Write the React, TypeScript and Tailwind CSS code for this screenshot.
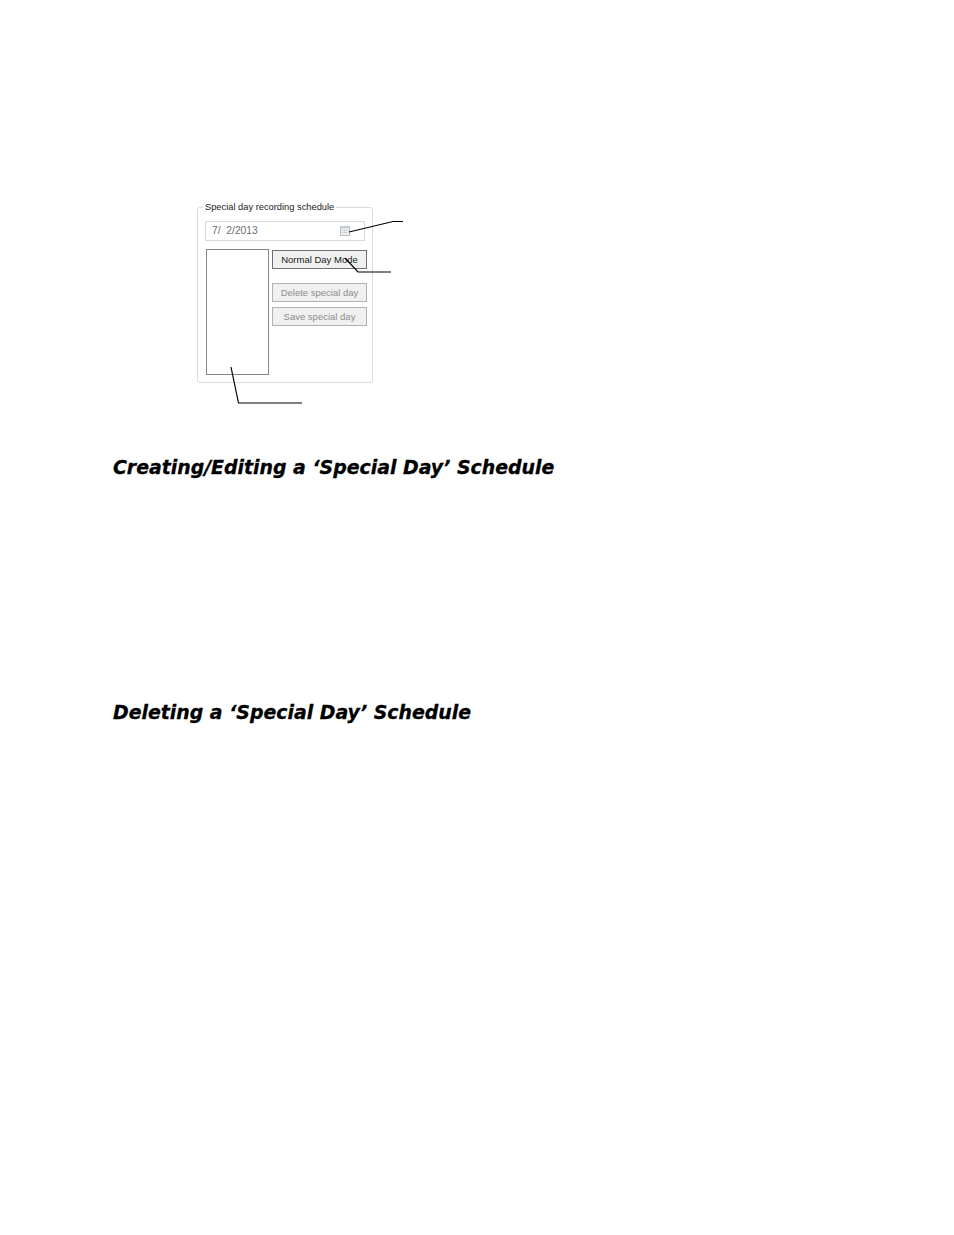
import React from "react";

const ui = { fontFamily: '"Liberation Sans", Arial, sans-serif' };
const head = { fontFamily: '"DejaVu Sans", "Liberation Sans", sans-serif' };

function CalendarIcon() {
  return (
    <svg width="10" height="10" viewBox="0 0 10 10" className="block">
      <rect x="0.5" y="0.5" width="9" height="9" fill="#eceef0" stroke="#b9bec4" />
      <rect x="0.5" y="0.5" width="9" height="2" fill="#c9ced3" />
      <g fill="#b5bbc1">
        <rect x="2" y="4" width="1" height="1" />
        <rect x="4" y="4" width="1" height="1" />
        <rect x="6" y="4" width="1" height="1" />
        <rect x="2" y="6" width="1" height="1" />
        <rect x="4" y="6" width="1" height="1" />
        <rect x="6" y="6" width="1" height="1" />
      </g>
    </svg>
  );
}

function Btn({ label, disabled }: { label: string; disabled?: boolean }) {
  return (
    <div
      className={
        "h-[19px] w-[95px] flex items-center justify-center text-[9.5px] leading-none bg-[#f0f0f0] border " +
        (disabled
          ? "border-[#adb2b5] text-[#8d8d8d]"
          : "border-[#707070] text-[#1a1a1a]")
      }
    >
      {label}
    </div>
  );
}

export default function App() {
  return (
    <div className="relative w-[954px] h-[1235px] bg-white" style={ui}>
      <div className="pt-[207px] pl-[197px]">
        <div className="relative w-[176px] h-[176px] border border-[#d5dde3] rounded-[3px] pt-[13px] pl-[7px]">
          <span className="absolute left-[5px] top-[-7px] bg-white px-[2px] text-[9.3px] leading-[12px] text-[#1a1a1a]">
            Special day recording schedule
          </span>
          <div className="w-[160px] h-[20px] border border-[#d3d9de] flex items-center justify-between pl-[6px] pr-[14px]">
            <span className="text-[10.3px] leading-none text-[#6d6d6d] whitespace-pre">7/  2/2013</span>
            <CalendarIcon />
          </div>
          <div className="flex mt-[8px] pl-[1px] gap-[3px]">
            <div className="w-[63px] h-[126px] border border-[#828790] bg-white" />
            <div className="flex flex-col pt-[1px]">
              <Btn label="Normal Day Mode" />
              <div className="mt-[14px] flex flex-col gap-[5px]">
                <Btn label="Delete special day" disabled />
                <Btn label="Save special day" disabled />
              </div>
            </div>
          </div>
        </div>
      </div>

      <h2
        className="mt-[72px] ml-[113px] text-[18.9px] leading-[24px] font-bold italic text-black [-webkit-text-stroke:0.3px_black]"
        style={head}
      >
        Creating/Editing a ‘Special Day’ Schedule
      </h2>
      <h2
        className="mt-[221px] ml-[113px] text-[18.9px] leading-[24px] font-bold italic text-black [-webkit-text-stroke:0.3px_black]"
        style={head}
      >
        Deleting a ‘Special Day’ Schedule
      </h2>

      <svg className="absolute left-0 top-0 pointer-events-none" width="954" height="1235">
        <g stroke="#000" strokeWidth="1.2" fill="none">
          <polyline points="349,232 393,221.5 403,221.5" />
          <polyline points="345,258 358,272 391,272" />
          <polyline points="231,367 238.5,403 302,403" />
        </g>
      </svg>
    </div>
  );
}
